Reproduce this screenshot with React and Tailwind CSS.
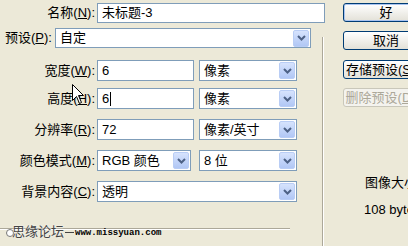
import React from 'react';

const Arrow = () => (
    <div className="ml-auto mr-[1px] w-[16px] h-[17px] flex-none rounded-[2px] border border-[#b9cdf5] bg-gradient-to-b from-[#d6e3fd] to-[#b1c7f5] flex items-center justify-center">
        <svg width="9" height="6" viewBox="0 0 9 6">
            <path d="M1 1 L4.5 4.5 L8 1" stroke="#4d6185" strokeWidth="2" fill="none" />
        </svg>
    </div>
);

function Field({ w, children, select, caret }) {
    return (
        <div className={`${w} h-full flex-none border border-[#7f9db9] bg-white flex items-center pl-[4px] whitespace-nowrap`}>
            <span>{children}</span>
            {caret && <span className="w-px h-[14px] bg-black ml-px" />}
            {select && <Arrow />}
        </div>
    );
}

function Label({ text, k }) {
    return (
        <div className="w-[97px] flex-none text-right pr-[2px] whitespace-nowrap">
            {text}(<u>{k}</u>):
        </div>
    );
}

function Btn({ children, primary, disabled }) {
    return (
        <div
            className={`w-[86px] h-[19px] flex-none rounded-[3px] border flex items-center justify-center whitespace-nowrap ${disabled
                ? 'border-[#c9c7ba] text-[#aca899] bg-[#f4f3ee]'
                : 'border-[#003c74] bg-gradient-to-b from-white to-[#e3e1d8] text-black'} ${primary ? 'shadow-[inset_0_0_0_1px_#a9c4f0]' : ''}`}
        >
            {children}
        </div>
    );
}

export default function App() {
    return (
        <div className="w-[408px] h-[246px] bg-[#ece9d8] overflow-hidden relative font-['Liberation_Sans','Noto_Sans_CJK_SC',sans-serif] text-[13px] text-black flex">
            {/* left: form */}
            <div className="w-[322px] flex-none flex flex-col pt-[3px]">
                <div className="h-[20px] flex items-center">
                    <Label text="名称" k="N" />
                    <Field w="w-[228px]">未标题-3</Field>
                </div>
                <div className="h-[20px] mt-[5px] flex items-center">
                    <div className="w-[55px] flex-none pl-[5px] whitespace-nowrap">预设(<u>P</u>):</div>
                    <Field w="w-[256px]" select>自定</Field>
                </div>
                <div className="h-[21px] mt-[12px] flex items-center">
                    <Label text="宽度" k="W" />
                    <Field w="w-[97px]">6</Field>
                    <div className="ml-[5px] h-full flex"><Field w="w-[98px]" select>像素</Field></div>
                </div>
                <div className="h-[21px] mt-[7px] flex items-center">
                    <Label text="高度" k="H" />
                    <Field w="w-[97px]" caret>6</Field>
                    <div className="ml-[5px] h-full flex"><Field w="w-[98px]" select>像素</Field></div>
                </div>
                <div className="h-[21px] mt-[10px] flex items-center">
                    <Label text="分辨率" k="R" />
                    <Field w="w-[97px]">72</Field>
                    <div className="ml-[5px] h-full flex"><Field w="w-[98px]" select>像素/英寸</Field></div>
                </div>
                <div className="h-[21px] mt-[10px] flex items-center">
                    <Label text="颜色模式" k="M" />
                    <Field w="w-[94px]" select>RGB 颜色</Field>
                    <div className="ml-[8px] h-full flex"><Field w="w-[98px]" select>8 位</Field></div>
                </div>
                <div className="h-[21px] mt-[10px] flex items-center">
                    <Label text="背景内容" k="C" />
                    <Field w="w-[200px]" select>透明</Field>
                </div>
                <div className="mt-[26px] w-[290px] border-t border-[#aca899] border-b border-b-white" />
            </div>

            {/* separator */}
            <div className="w-[2px] flex-none mt-[37px] border-l border-[#aca899] border-r border-r-white" />

            {/* right: buttons + info */}
            <div className="flex-1 flex flex-col pt-[3px] pl-[19px]">
                <Btn primary>好</Btn>
                <div className="mt-[9px]"><Btn>取消</Btn></div>
                <div className="mt-[10px]"><Btn>存储预设(<u>S</u>)...</Btn></div>
                <div className="mt-[9px]"><Btn disabled>删除预设(<u>D</u>)...</Btn></div>
                <div className="mt-[66px] pl-[22px] whitespace-nowrap">图像大小:</div>
                <div className="mt-[7px] pl-[21px] whitespace-nowrap">108 bytes</div>
            </div>

            {/* mouse pointer */}
            <svg className="absolute left-[72px] top-[84px]" width="13" height="21" viewBox="0 0 13 21">
                <path d="M0.5 0.5 L0.5 16.5 L4.5 12.5 L7.5 19.5 L9.5 18.5 L6.5 11.5 L11.5 11.5 Z" fill="white" stroke="black" strokeWidth="1" />
            </svg>

            {/* watermark */}
            <div className="absolute left-[6px] top-[221px] flex items-center">
                <span className="w-[8px] h-[8px] rounded-full border border-[#777] bg-white mr-[-2px] mt-[4px]" />
                <span className="text-[13px] text-[#444] font-['Noto_Sans_CJK_SC',sans-serif] [text-shadow:0_0_2px_white]">思缘论坛</span>
                <span className="w-[9px] h-px bg-[#444] mt-[4px] mx-[1px]" />
                <span className="text-[9px] font-bold font-['Liberation_Mono',monospace] mt-[6px]">www.missyuan.com</span>
            </div>
        </div>
    );
}
